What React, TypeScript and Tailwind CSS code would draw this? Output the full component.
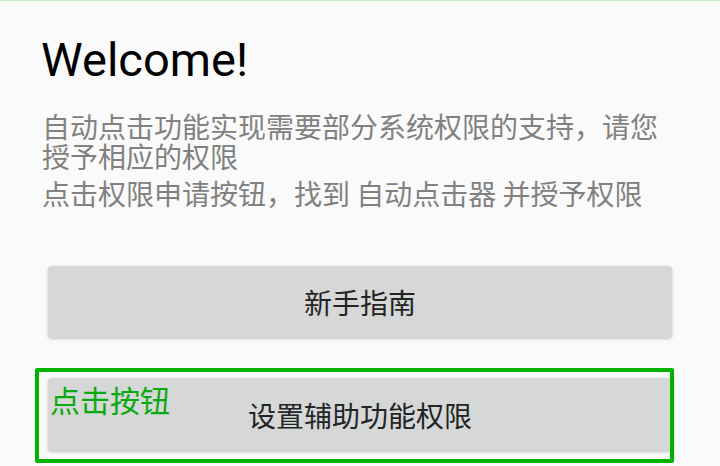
import React from 'react';

const cjk = { fontFamily: '"Noto Sans CJK SC", "Noto Sans", sans-serif' };

const App: React.FC = () => {
  return (
    <div className="w-[720px] h-[466px] overflow-hidden bg-[#fafafa] border-t border-[#c6ebc8]">
      <div className="px-[42px] pt-[35px]">
        <h1
          className="text-[47px] leading-[48px] text-black -ml-px"
          style={{ fontFamily: 'Roboto, "Liberation Sans", sans-serif' }}
        >
          Welcome!
        </h1>
        <div className="mt-[27px] text-[28px] leading-[30px] text-[#818181]" style={cjk}>
          <p>自动点击功能实现需要部分系统权限的支持，请您授予相应的权限</p>
          <p className="mt-[7px]">点击权限申请按钮，找到 自动点击器 并授予权限</p>
        </div>
      </div>

      <div className="px-[48px] mt-[58px] flex flex-col gap-[40px]" style={cjk}>
        <button className="h-[72px] w-full rounded-[4px] bg-[#d6d7d7] shadow-[0_1px_3px_rgba(0,0,0,0.22)] flex items-center justify-center text-[28px] text-[#242424]">
          新手指南
        </button>

        <div className="relative">
          <button className="h-[73px] w-full rounded-[4px] bg-[#d6d7d7] shadow-[0_1px_3px_rgba(0,0,0,0.22)] flex items-center justify-center text-[28px] text-[#242424]">
            设置辅助功能权限
          </button>
          {/* annotation overlay */}
          <div className="absolute left-[-13px] top-[-10px] w-[639px] h-[95px] border-4 border-[#00b300] rounded-[2px] pointer-events-none" />
          <span className="absolute left-[2px] top-[6px] text-[30px] leading-[30px] text-[#09a90f]">
            点击按钮
          </span>
        </div>
      </div>
    </div>
  );
};

export default App;
